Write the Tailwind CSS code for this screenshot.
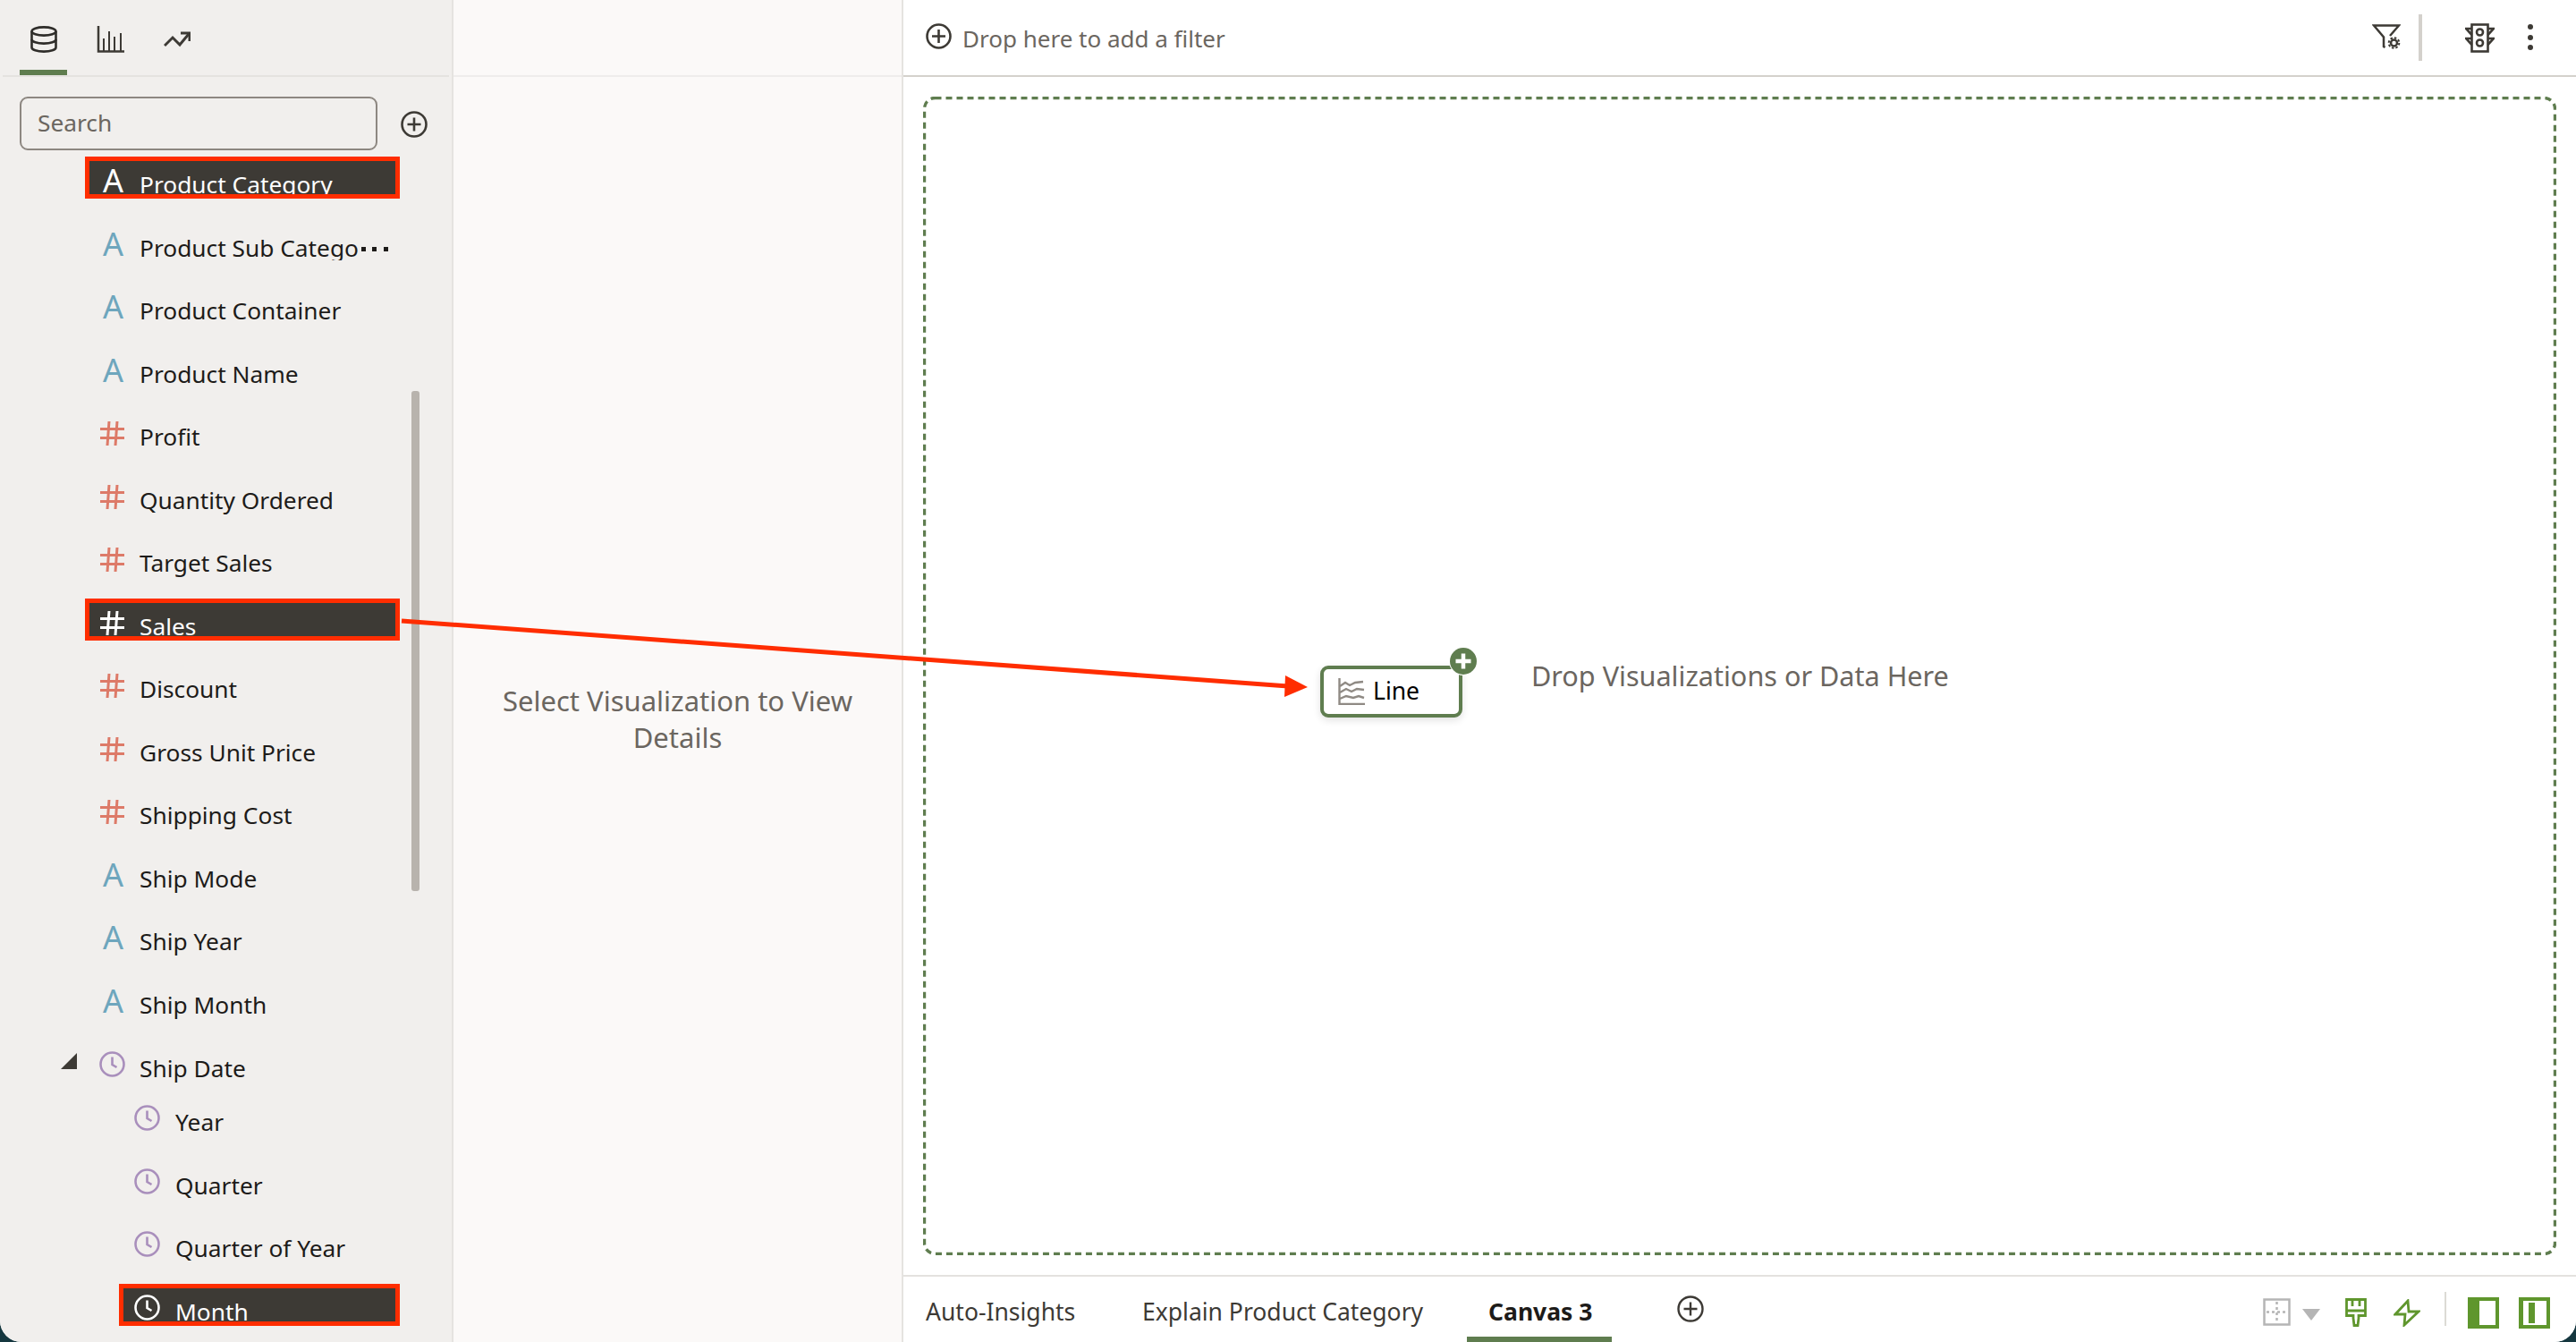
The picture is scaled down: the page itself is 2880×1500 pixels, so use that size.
<!DOCTYPE html>
<html lang="en">
<head>
<meta charset="UTF-8">
<title>Canvas 3</title>
<script src="https://cdn.jsdelivr.net/npm/@tailwindcss/browser@4"></script>
</head>
<body class="bg-[#15373f] font-['Noto_Sans',sans-serif] overflow-hidden">
<div class="relative flex w-[2880px] h-[1500px] overflow-hidden rounded-b-[24px] bg-white">

  <!-- Data panel -->
  <aside class="relative w-[507px] shrink-0 bg-[#f1efed] border-r-2 border-[#e5e3e0] flex flex-col">
    <div class="h-[86px] mx-[3px] border-b-2 border-[#e4e2df] flex items-start relative">
      <div class="ml-[19px] w-[53px] h-[84px] border-b-[6px] border-[#5f7d4f] flex justify-center pt-[29px]">
        <svg width="30" height="30" viewBox="0 0 30 30" fill="none" stroke="#2f2d2a" stroke-width="2.6"><ellipse cx="15" cy="6" rx="13.5" ry="4.6"/><path d="M1.5 6v18c0 2.800 6 4.600 13.500 4.600s13.500-1.800 13.500-4.600V6"/><path d="M1.500 15c0 2.800 6 4.600 13.500 4.600s13.500-1.800 13.500-4.600"/></svg>
      </div>
      <svg class="ml-[33px] mt-[29px]" width="31" height="30" viewBox="0 0 31 30" fill="none" stroke="#3d3a35" stroke-width="2.500"><path d="M2 0v28.500h29"/><path d="M8 14v14M14 6v22M20 12v16M27 8v20" stroke-width="2"/></svg>
      <svg class="ml-[44px] mt-[35px]" width="30" height="18" viewBox="0 0 30 18" fill="none" stroke="#3d3a35" stroke-width="3"><path d="M1 16l9-9 8 8L28 3"/><path d="M19 2h10v9"/></svg>
    </div>
    <div class="h-[89px] pl-[22px] flex items-start pt-[22px]">
      <div class="w-[400px] h-[60px] rounded-[9px] border-2 border-[#8d8781] flex items-center pl-[18px] text-[26.300px] text-[#6b6660]">Search</div>
      <svg class="ml-[26px] mt-[16px]" width="30" height="30" viewBox="0 0 30 30" fill="none" stroke="#3d3a35" stroke-width="2.600"><circle cx="15" cy="15" r="13.500"/><path d="M15 7.500v15M7.500 15h15"/></svg>
    </div>

    <div class="flex-1 overflow-hidden text-[26.300px] text-[#1d1b19] leading-[36px]">
      <div class="h-[70.5px] pl-[95px]">
        <div class="w-[352px] h-[47px] border-[5px] border-[#ff2d00] bg-[#3d3a35] text-white flex pl-[15px] overflow-hidden">
          <span class="w-[41px] pt-[4px] text-[36px]">A</span><span class="pt-[8px]">Product Category</span>
        </div>
      </div>
      <div class="h-[70.5px] pl-[95px]">
        <div class="w-[352px] h-[50px] border-[5px] border-transparent flex pl-[15px] overflow-hidden">
          <span class="w-[41px] pt-[4px] text-[36px] text-[#6ea6bd]">A</span><span class="pt-[8px]">Product Sub Catego</span>
          <svg class="ml-[3px] mt-[25px]" width="32" height="6" viewBox="0 0 32 6" fill="#1d1b19"><rect x="0" width="5" height="5"/><rect x="12" width="5" height="5"/><rect x="25" width="5" height="5"/></svg>
        </div>
      </div>
      <div class="h-[70.5px] pl-[95px]">
        <div class="w-[352px] border-[5px] border-transparent flex pl-[15px]">
          <span class="w-[41px] pt-[4px] text-[36px] text-[#6ea6bd]">A</span><span class="pt-[8px]">Product Container</span>
        </div>
      </div>
      <div class="h-[70.5px] pl-[95px]">
        <div class="w-[352px] border-[5px] border-transparent flex pl-[15px]">
          <span class="w-[41px] pt-[4px] text-[36px] text-[#6ea6bd]">A</span><span class="pt-[8px]">Product Name</span>
        </div>
      </div>
      <div class="h-[70.5px] pl-[95px]">
        <div class="w-[352px] border-[5px] border-transparent flex pl-[15px]">
          <span class="w-[41px] shrink-0"><svg class="-ml-[3px] mt-[9px]" width="27" height="27" viewBox="0 0 27 27" fill="none" stroke="#dd7a68" stroke-width="3"><path d="M10 0L8 27M19 0l-2 27M0 8.500h27M0 18.500h27"/></svg></span><span class="pt-[8px]">Profit</span>
        </div>
      </div>
      <div class="h-[70.5px] pl-[95px]">
        <div class="w-[352px] border-[5px] border-transparent flex pl-[15px]">
          <span class="w-[41px] shrink-0"><svg class="-ml-[3px] mt-[9px]" width="27" height="27" viewBox="0 0 27 27" fill="none" stroke="#dd7a68" stroke-width="3"><path d="M10 0L8 27M19 0l-2 27M0 8.500h27M0 18.500h27"/></svg></span><span class="pt-[8px]">Quantity Ordered</span>
        </div>
      </div>
      <div class="h-[70.5px] pl-[95px]">
        <div class="w-[352px] border-[5px] border-transparent flex pl-[15px]">
          <span class="w-[41px] shrink-0"><svg class="-ml-[3px] mt-[9px]" width="27" height="27" viewBox="0 0 27 27" fill="none" stroke="#dd7a68" stroke-width="3"><path d="M10 0L8 27M19 0l-2 27M0 8.500h27M0 18.500h27"/></svg></span><span class="pt-[8px]">Target Sales</span>
        </div>
      </div>
      <div class="h-[70.5px] pl-[95px]">
        <div class="w-[352px] h-[47px] border-[5px] border-[#ff2d00] bg-[#3d3a35] text-white flex pl-[15px] overflow-hidden">
          <span class="w-[41px] shrink-0"><svg class="-ml-[3px] mt-[9px]" width="27" height="27" viewBox="0 0 27 27" fill="none" stroke="#ffffff" stroke-width="3"><path d="M10 0L8 27M19 0l-2 27M0 8.500h27M0 18.500h27"/></svg></span><span class="pt-[8px]">Sales</span>
        </div>
      </div>
      <div class="h-[70.5px] pl-[95px]">
        <div class="w-[352px] border-[5px] border-transparent flex pl-[15px]">
          <span class="w-[41px] shrink-0"><svg class="-ml-[3px] mt-[9px]" width="27" height="27" viewBox="0 0 27 27" fill="none" stroke="#dd7a68" stroke-width="3"><path d="M10 0L8 27M19 0l-2 27M0 8.500h27M0 18.500h27"/></svg></span><span class="pt-[8px]">Discount</span>
        </div>
      </div>
      <div class="h-[70.5px] pl-[95px]">
        <div class="w-[352px] border-[5px] border-transparent flex pl-[15px]">
          <span class="w-[41px] shrink-0"><svg class="-ml-[3px] mt-[9px]" width="27" height="27" viewBox="0 0 27 27" fill="none" stroke="#dd7a68" stroke-width="3"><path d="M10 0L8 27M19 0l-2 27M0 8.500h27M0 18.500h27"/></svg></span><span class="pt-[8px]">Gross Unit Price</span>
        </div>
      </div>
      <div class="h-[70.5px] pl-[95px]">
        <div class="w-[352px] border-[5px] border-transparent flex pl-[15px]">
          <span class="w-[41px] shrink-0"><svg class="-ml-[3px] mt-[9px]" width="27" height="27" viewBox="0 0 27 27" fill="none" stroke="#dd7a68" stroke-width="3"><path d="M10 0L8 27M19 0l-2 27M0 8.500h27M0 18.500h27"/></svg></span><span class="pt-[8px]">Shipping Cost</span>
        </div>
      </div>
      <div class="h-[70.5px] pl-[95px]">
        <div class="w-[352px] border-[5px] border-transparent flex pl-[15px]">
          <span class="w-[41px] pt-[4px] text-[36px] text-[#6ea6bd]">A</span><span class="pt-[8px]">Ship Mode</span>
        </div>
      </div>
      <div class="h-[70.5px] pl-[95px]">
        <div class="w-[352px] border-[5px] border-transparent flex pl-[15px]">
          <span class="w-[41px] pt-[4px] text-[36px] text-[#6ea6bd]">A</span><span class="pt-[8px]">Ship Year</span>
        </div>
      </div>
      <div class="h-[71.500px] pl-[95px]">
        <div class="w-[352px] border-[5px] border-transparent flex pl-[15px]">
          <span class="w-[41px] pt-[4px] text-[36px] text-[#6ea6bd]">A</span><span class="pt-[8px]">Ship Month</span>
        </div>
      </div>
      <div class="h-[60px] pl-[95px] relative">
        <svg class="absolute left-[68px] top-[14px]" width="18" height="18" viewBox="0 0 18 18" fill="#3d3a35"><path d="M18 0v18H0z"/></svg>
        <div class="w-[352px] border-[5px] border-transparent flex pl-[15px]">
          <span class="w-[41px] shrink-0"><svg class="-ml-[4px] mt-[7px]" width="29" height="29" viewBox="0 0 29 29" fill="none" stroke="#a98fbc" stroke-width="2.600"><circle cx="14.500" cy="14.500" r="13"/><path d="M14.500 6.500v8.500l5 3"/></svg></span><span class="pt-[8px]">Ship Date</span>
        </div>
      </div>
      <div class="h-[70.500px] pl-[133px]">
        <div class="w-[314px] border-[5px] border-transparent flex pl-[12px]">
          <span class="w-[46px] shrink-0"><svg class="mt-[7px]" width="29" height="29" viewBox="0 0 29 29" fill="none" stroke="#a98fbc" stroke-width="2.600"><circle cx="14.500" cy="14.500" r="13"/><path d="M14.500 6.500v8.500l5 3"/></svg></span><span class="pt-[8px]">Year</span>
        </div>
      </div>
      <div class="h-[70.500px] pl-[133px]">
        <div class="w-[314px] border-[5px] border-transparent flex pl-[12px]">
          <span class="w-[46px] shrink-0"><svg class="mt-[7px]" width="29" height="29" viewBox="0 0 29 29" fill="none" stroke="#a98fbc" stroke-width="2.600"><circle cx="14.500" cy="14.500" r="13"/><path d="M14.500 6.500v8.500l5 3"/></svg></span><span class="pt-[8px]">Quarter</span>
        </div>
      </div>
      <div class="h-[70.500px] pl-[133px]">
        <div class="w-[314px] border-[5px] border-transparent flex pl-[12px]">
          <span class="w-[46px] shrink-0"><svg class="mt-[7px]" width="29" height="29" viewBox="0 0 29 29" fill="none" stroke="#a98fbc" stroke-width="2.600"><circle cx="14.500" cy="14.500" r="13"/><path d="M14.500 6.500v8.500l5 3"/></svg></span><span class="pt-[8px]">Quarter of Year</span>
        </div>
      </div>
      <div class="h-[65px] pl-[133px]">
        <div class="w-[314px] h-[47px] border-[5px] border-[#ff2d00] bg-[#3d3a35] text-white flex pl-[12px] overflow-hidden">
          <span class="w-[46px] shrink-0"><svg class="mt-[7px]" width="29" height="29" viewBox="0 0 29 29" fill="none" stroke="#ffffff" stroke-width="2.600"><circle cx="14.500" cy="14.500" r="13"/><path d="M14.500 6.500v8.500l5 3"/></svg></span><span class="pt-[8px]">Month</span>
        </div>
      </div>
    </div>

    <!-- scrollbar -->
    <div class="absolute left-[460px] top-[437px] w-[9px] h-[559px] rounded-[3px] bg-[#b8b3ad]"></div>
  </aside>

  <!-- Details panel -->
  <section class="w-[503px] shrink-0 bg-[#fbf9f8] border-r-2 border-[#e5e3e0] flex flex-col">
    <div class="h-[86px] border-b-2 border-[#efedeb]"></div>
    <div class="flex-1 flex items-start justify-center pt-[677px] px-[40px] text-center text-[31px] leading-[41px] text-[#6b6660]">Select Visualization to View Details</div>
  </section>

  <!-- Canvas -->
  <main class="flex-1 flex flex-col bg-white min-w-0">
    <div class="h-[86px] shrink-0 border-b-2 border-[#d4d1cc] flex items-start">
      <svg class="ml-[25px] mt-[26px]" width="29" height="29" viewBox="0 0 29 29" fill="none" stroke="#3d3a35" stroke-width="2.600"><circle cx="14.500" cy="14.500" r="13"/><path d="M14.500 7v15M7 14.500h15"/></svg>
      <span class="ml-[12px] mt-[23px] text-[26px] leading-[40px] text-[#6b6660]">Drop here to add a filter</span>
      <svg class="ml-auto mt-[27px]" width="32" height="28" viewBox="0 0 32 28" fill="none" stroke="#3d3a35" stroke-width="2.500"><path d="M20 13L30 1.500H2l11 13V25l1.500 1"/><circle cx="24.500" cy="21" r="3.500" stroke-width="2.500"/><circle cx="24.500" cy="21" r="5.800" stroke-width="2" stroke-dasharray="2.500 2"/></svg>
      <div class="ml-[20px] mt-[16px] w-[4px] h-[52px] bg-[#d4d1cc]"></div>
      <svg class="ml-[48px] mt-[26px]" width="33" height="33" viewBox="0 0 33 33" fill="none" stroke="#3d3a35" stroke-width="2.600"><rect x="7.500" y="1.500" width="18" height="30"/><circle cx="16.500" cy="10" r="3.500"/><circle cx="16.500" cy="22" r="3.500"/><path d="M7.500 6H1l6.500 7M25.500 6H32l-6.500 7M7.500 17H1l6.500 7M25.500 17H32l-6.500 7"/></svg>
      <svg class="ml-[36px] mr-[47px] mt-[27px]" width="8" height="30" viewBox="0 0 8 30" fill="#3d3a35"><circle cx="4" cy="3" r="3"/><circle cx="4" cy="15" r="3"/><circle cx="4" cy="26" r="3"/></svg>
    </div>

    <div class="flex-1 p-[22px] min-h-0">
      <div class="relative h-full flex items-center pl-[444px]">
        <svg class="absolute inset-0 w-full h-full" fill="none"><rect x="1.500" y="1.500" width="1823" height="1292" rx="12" stroke="#5f7d4f" stroke-width="3.400" stroke-dasharray="7 5"/></svg>
        <div class="relative mt-[34px] w-[159px] h-[58px] rounded-[9px] border-4 border-[#5f7d4f] bg-white shadow-[0_3px_8px_rgba(0,0,0,0.12)] flex items-center pl-[16px] text-[26.500px] text-black">
          <svg width="30" height="30" viewBox="0 0 30 30" fill="none" stroke="#8f8a84" stroke-width="2.400"><path d="M1.500 0v29H30"/><path d="M2 9l6-4 5 3 6-3 9-1M2 16l7-4 6 3 6-3 8 1M2 23l7-3 8 2 6-2 6 2"/></svg>
          <span class="ml-[9px]">Line</span>
          <svg class="absolute -top-[25px] -right-[21px]" width="32" height="32" viewBox="0 0 32 32"><circle cx="16" cy="16" r="16" fill="#ffffff"/><circle cx="16" cy="16" r="15" fill="#5f7d4f"/><path d="M16 7.500v17M7.500 16h17" stroke="#ffffff" stroke-width="4.500"/></svg>
        </div>
        <span class="relative ml-[77px] text-[30.600px] text-[#6b6660]">Drop Visualizations or Data Here</span>
      </div>
    </div>

    <div class="h-[75px] shrink-0 border-t-2 border-[#e4e2df] flex items-stretch text-[26.500px] text-[#3d3a35]">
      <div class="w-[215px] pl-[25px] pt-[13px] flex items-center border-b-[6px] border-transparent">Auto-Insights</div>
      <div class="ml-[28px] w-[360px] pl-[24px] pt-[13px] flex items-center border-b-[6px] border-transparent">Explain Product Category</div>
      <div class="ml-[27px] w-[162px] pl-[24px] pt-[13px] flex items-center border-b-[6px] border-[#5f7d4f] font-bold text-[#1d1b19]">Canvas 3</div>
      <svg class="ml-[73px] mt-[21px]" width="30" height="30" viewBox="0 0 30 30" fill="none" stroke="#3d3a35" stroke-width="2.400"><circle cx="15" cy="15" r="13.500"/><path d="M15 7.500v15M7.500 15h15"/></svg>
      <svg class="ml-auto mt-[24px]" width="31" height="31" viewBox="0 0 31 31" fill="none" stroke="#b5b5b5" stroke-width="2.500"><rect x="1.500" y="1.500" width="28" height="28"/><path d="M15.500 4v24M4 15.500h24" stroke-width="2.500" stroke-dasharray="3 3"/></svg>
      <svg class="ml-[13px] mt-[36px]" width="20" height="13" viewBox="0 0 20 13" fill="#b5b5b5"><path d="M0 0h20L10 13z"/></svg>
      <svg class="ml-[28px] mt-[24px]" width="24" height="32" viewBox="0 0 24 32" fill="none" stroke="#5f962d" stroke-width="2.800"><path d="M1.500 1.500h21v18H15v3l-1 8h-4l-1-8v-3H1.500z"/><path d="M1.500 14h21M8 1.500V9M16 1.500V9"/></svg>
      <svg class="ml-[30px] mt-[25px]" width="30" height="31" viewBox="0 0 30 31" fill="none" stroke="#5f962d" stroke-width="2.800"><path d="M16 2L2 17h11l-1 12 16-15H17z"/></svg>
      <div class="ml-[27px] mt-[17px] w-[2px] h-[38px] bg-[#dcdbd5]"></div>
      <svg class="ml-[24px] mt-[23px]" width="35" height="35" viewBox="0 0 35 35"><rect width="35" height="35" fill="#5f962d"/><rect x="13" y="4" width="18" height="27" fill="#ffffff"/></svg>
      <svg class="ml-[22px] mr-[29px] mt-[23px]" width="35" height="35" viewBox="0 0 35 35"><rect width="35" height="35" fill="#5f962d"/><rect x="5" y="4" width="26" height="27" fill="#ffffff"/><rect x="11" y="6" width="7" height="23" fill="#5f962d"/></svg>
    </div>
  </main>

  <!-- drag annotation arrow -->
  <svg class="absolute inset-0 pointer-events-none" width="2880" height="1500" fill="none"><path d="M449 694L1440 767" stroke="#ff2d00" stroke-width="5"/><path d="M1462 768L1437 755l-1 24z" fill="#ff2d00"/></svg>
</div>
</body>
</html>
